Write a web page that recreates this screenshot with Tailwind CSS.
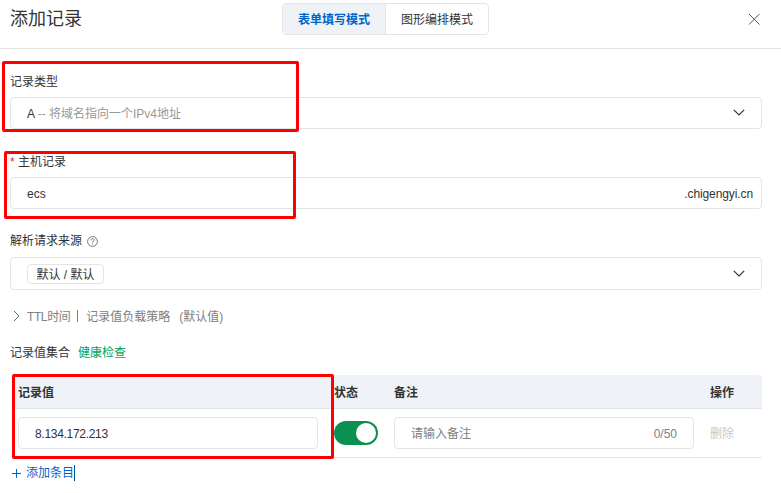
<!DOCTYPE html>
<html lang="zh-CN">
<head>
    <meta charset="UTF-8">
    <title>添加记录</title>
    <script src="https://cdn.jsdelivr.net/npm/@tailwindcss/browser@4"></script>
</head>
<body class="bg-white font-['Liberation_Sans','Noto_Sans_CJK_SC',sans-serif] text-xs text-[#333] overflow-hidden">
<div class="relative w-[781px] h-[493px] overflow-hidden">
    <!-- header -->
    <div class="relative flex items-center h-[49px] pb-[10px] pl-[10px] border-b border-[#e5e5e5]">
        <h1 class="text-lg text-[#333] leading-6">添加记录</h1>
        <div class="absolute left-[282px] top-[3px] flex h-[32px] border border-[#e5e5e5] rounded-sm">
            <div class="w-[103px] pt-[2px] flex items-center justify-center bg-[#eff3f8] text-[#0064c8] font-bold border-r border-[#e5e5e5]">表单填写模式</div>
            <div class="w-[102px] pt-[2px] flex items-center justify-center">图形编排模式</div>
        </div>
        <svg class="absolute left-[748px] top-[13px]" width="13" height="13" viewBox="0 0 13 13" fill="none" stroke="#555" stroke-width="1"><path d="M1 1l10.5 10.5M11.5 1L1 11.5"/></svg>
    </div>

    <!-- form -->
    <div class="pl-[10px] w-[762px]">
        <div class="mt-[24px] h-[16px] leading-[18px]">记录类型</div>
        <div class="mt-[8px] h-[32px] border border-[#e5e5e5] rounded-sm flex items-center justify-between pl-[16px] pr-[16px]">
            <span class="pt-[2px] text-[#999]"><span class="text-[#333]">A</span> -- 将域名指向一个IPv4地址</span>
            <svg width="12" height="8" viewBox="0 0 12 8" fill="none" stroke="#333" stroke-width="1.2"><path d="M.8 .8l5.2 5.2 5.2-5.2"/></svg>
        </div>

        <div class="mt-[24px] h-[16px] leading-[18px]"><span class="text-[#d93026]">*</span> 主机记录</div>
        <div class="mt-[8px] h-[32px] border border-[#e5e5e5] rounded-sm flex items-center justify-between pl-[16px] pr-[8px]">
            <span class="pt-[2px]">ecs</span>
            <span class="pt-[2px] tracking-[-0.1px]">.chigengyi.cn</span>
        </div>

        <div class="mt-[24px] h-[16px] leading-[18px] flex items-center gap-[5px]">
            <span>解析请求来源</span>
            <svg width="11" height="11" viewBox="0 0 11 11" fill="none" stroke="#666" stroke-width="0.9"><circle cx="5.5" cy="5.5" r="4.9"/><path d="M3.9 4.3c0-2.1 3.2-2.1 3.2-.1 0 1.2-1.6 1.2-1.6 2.6M5.5 7.6v.9"/></svg>
        </div>
        <div class="mt-[8px] h-[33px] border border-[#e5e5e5] rounded-sm flex items-center justify-between pl-[16px] pr-[16px]">
            <span class="h-[20px] w-[77px] pt-[2px] flex items-center justify-center border border-[#e5e5e5] rounded-sm">默认 / 默认</span>
            <svg width="12" height="8" viewBox="0 0 12 8" fill="none" stroke="#333" stroke-width="1.2"><path d="M.8 .8l5.2 5.2 5.2-5.2"/></svg>
        </div>

        <div class="mt-[18px] h-[16px] flex items-center text-[#808080]">
            <svg class="ml-[3px] mr-[7px]" width="7" height="12" viewBox="0 0 7 12" fill="none" stroke="#666" stroke-width="1"><path d="M1 1l5 5-5 5"/></svg>
            <span class="pt-[2px] tracking-[-0.4px]">TTL时间</span>
            <span class="ml-[7px] mr-[8px] h-[12px] w-px bg-[#808080]"></span>
            <span class="pt-[2px]">记录值负载策略</span>
            <span class="pt-[2px] ml-[9px]">(默认值)</span>
        </div>

        <div class="mt-[20px] h-[16px] flex items-center gap-[8px]">
            <span class="pt-[2px]">记录值集合</span>
            <span class="pt-[2px] text-[#00a35c]">健康检查</span>
        </div>

        <!-- table -->
        <div class="mt-[15px] ml-[2px] w-[750px]">
            <div class="h-[34px] flex items-center font-bold bg-[#eff3f8] border-b border-[#e5e5e5] rounded-t-sm">
                <span class="pt-[2px] ml-[6px] w-[316px]">记录值</span>
                <span class="pt-[2px] w-[60px]">状态</span>
                <span class="pt-[2px] w-[316px]">备注</span>
                <span class="pt-[2px]">操作</span>
            </div>
            <div class="h-[49px] flex items-center border-b border-[#e5e5e5]">
                <div class="ml-[6px] w-[300px] h-[32px] border border-[#e5e5e5] rounded-sm flex items-center pl-[16px]"><span class="pt-[2px] tracking-[-0.3px]">8.134.172.213</span></div>
                <div class="ml-[16px] w-[44px] h-[24px] rounded-full bg-[#0a914f] relative">
                    <span class="absolute right-[2px] top-[2px] w-[20px] h-[20px] rounded-full bg-white"></span>
                </div>
                <div class="ml-[16px] w-[300px] h-[32px] border border-[#e5e5e5] rounded-sm flex items-center justify-between px-[16px] text-[#808080]">
                    <span class="pt-[2px]">请输入备注</span>
                    <span class="pt-[2px]">0/50</span>
                </div>
                <span class="pt-[2px] ml-[16px] text-[#c8c8c8]">删除</span>
            </div>
        </div>

        <div class="mt-[7px] h-[16px] ml-[2px] flex items-center text-[#0064c8]">
            <svg class="mr-[5px]" width="9" height="9" viewBox="0 0 9 9" fill="none" stroke="#0064c8" stroke-width="1"><path d="M4.5 0v9M0 4.5h9"/></svg>
            <span>添加条目</span>
            <span class="w-px h-[16px] bg-[#00509e]"></span>
        </div>
    </div>

    <!-- red annotation boxes drawn on top of the screenshot -->
    <div class="absolute left-[2px] top-[61px] w-[297px] h-[71px] border-[3px] border-[#ff0000] rounded-[2px]"></div>
    <div class="absolute left-[4px] top-[151px] w-[292px] h-[68px] border-[3px] border-[#ff0000] rounded-[2px]"></div>
    <div class="absolute left-[12px] top-[374px] w-[322px] h-[85px] border-[3px] border-[#ff0000] rounded-[2px]"></div>
</div>
</body>
</html>
